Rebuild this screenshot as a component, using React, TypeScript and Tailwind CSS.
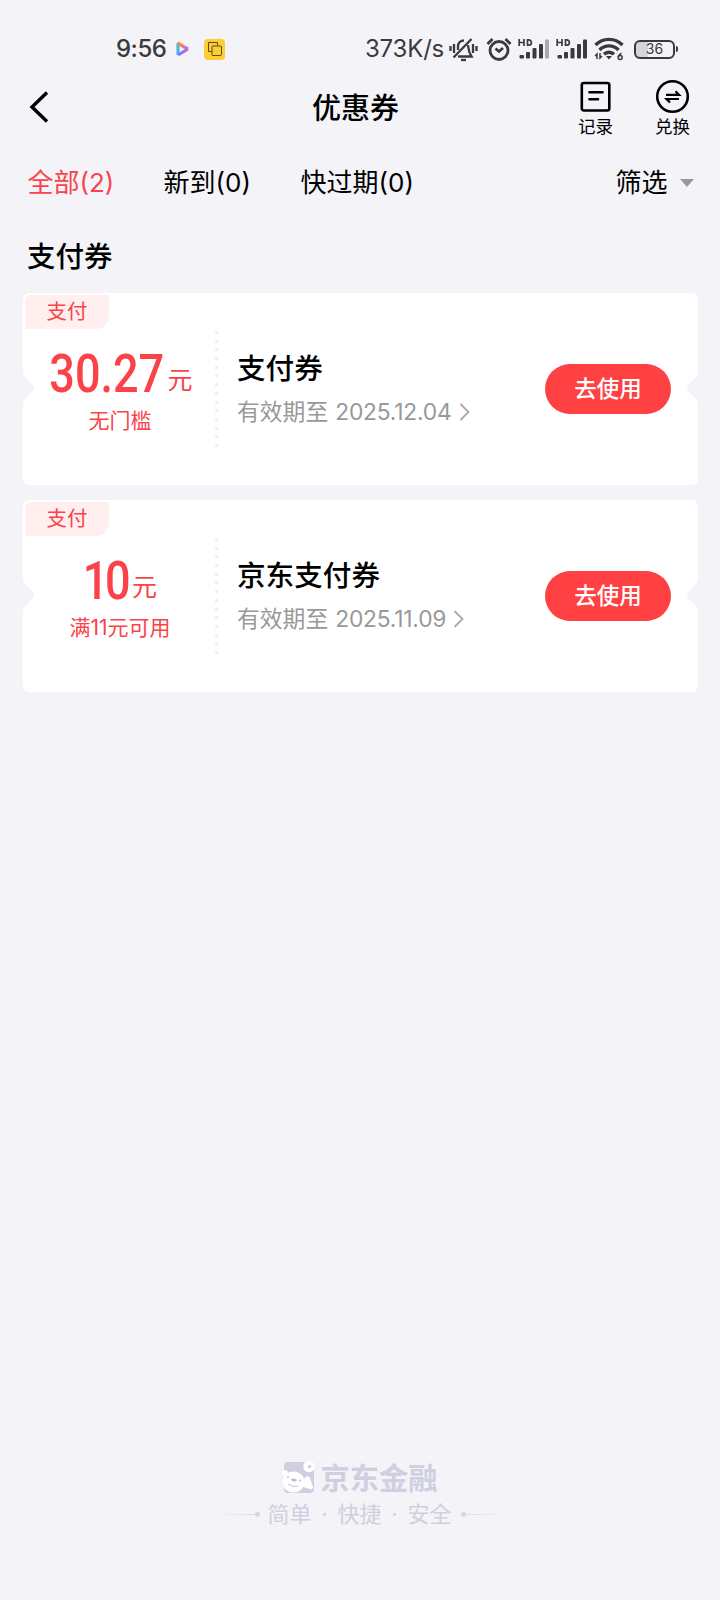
import { clsx } from 'clsx';

type Coupon = {
  id: number;
  amount: string;
  condition: string;
  title: string;
  expires: string;
};

const coupons: Coupon[] = [
  { id: 1, amount: '30.27', condition: '无门槛', title: '支付券', expires: '2025.12.04' },
  { id: 2, amount: '10', condition: '满11元可用', title: '京东支付券', expires: '2025.11.09' },
];

const tabs = [
  { label: '全部', count: 2, className: 'w-[136px] text-[#f8454c]' },
  { label: '新到', count: 0, className: 'w-[137px]' },
  { label: '快过期', count: 0, className: 'w-[315px]' },
];

const Signal = ({ weak = false }: { weak?: boolean }) => (
  <svg width="32" height="22" viewBox="0 0 32 22" fill="#3a3a3e">
    <path
      d="M1.200 1v7M6 1v7M1 4.500h5M9.500 1.800v5.400h1.200a2.700 2.700 0 0 0 0-5.400z"
      fill="none"
      stroke="#3a3a3e"
      strokeWidth="1.700"
    />
    <rect x="1.500" y="17" width="4.500" height="3.500" rx="1" />
    <rect x="8" y="14" width="4" height="6.500" rx="1" />
    <rect x="14.500" y="10" width="4" height="10.500" rx="1" />
    <rect x="21" y="6" width="4" height="14.500" rx="1" />
    <rect x="27" y="1.500" width="4" height="19" rx="1" opacity={weak ? 0.4 : 1} />
  </svg>
);

const StatusBar = () => (
  <div className="flex h-[70px] items-end pb-[5px] pl-[115px] font-['Inter','Noto_Sans_CJK_SC',sans-serif] text-[#3a3a3e]">
    <div className="flex h-8 w-[250px] items-center">
      <span className="w-[61px] pl-px text-[24px] font-medium tracking-[-0.5px]">9:56</span>
      <svg width="14" height="16" viewBox="0 0 14 16" fill="none" strokeWidth="3.2">
        <path d="M2 2v12" stroke="#45b9f2" />
        <path d="M2 14l10-6" stroke="#a56cf0" />
        <path d="M1.500 2l6 3.500" stroke="#f08a4e" />
        <path d="M7 5.300L12 8" stroke="#c773c9" />
      </svg>
      <div className="ml-[14px] flex size-[21px] items-center justify-center rounded-[4px] bg-[#fbcd36]">
        <svg width="14" height="14" viewBox="0 0 14 14" fill="none" stroke="#5c4a12" strokeWidth="1">
          <path d="M3.500 9.500h-3v-9h9v3" />
          <rect x="4" y="4" width="9.500" height="9.500" rx="1" />
        </svg>
      </div>
    </div>
    <div className="flex h-8 items-center">
      <span className="w-[84px] whitespace-nowrap text-[24px] tracking-[-0.2px]">373K/s</span>
      <svg className="shrink-0" width="29" height="25" viewBox="0 0 29 25" fill="none" stroke="#3a3a3e" strokeWidth="2.300">
        <path d="M1.500 9v5M5 7v9M24 7v9M27.500 9v5M4.500 20.500L22.500 2M9 13V9.500C9 6 11.500 3.500 15 3.500M19 8c.5 5 .5 7 3.500 11.500H9" />
        <path d="M12 23h5" />
      </svg>
      <svg className="ml-2" width="26" height="25" viewBox="0 0 26 25" fill="none" stroke="#3a3a3e" strokeWidth="2.800">
        <circle cx="13" cy="13.500" r="9" />
        <path d="M9.500 11.500l3.500 3 4-3.500M1.500 7l5-5M24.500 7l-5-5" />
      </svg>
      <div className="ml-[6px] flex gap-[6px]">
        <Signal weak />
        <Signal />
      </div>
      <svg className="ml-[6px]" width="30" height="24" viewBox="0 0 30 24" fill="none" stroke="#3a3a3e" strokeWidth="3.400">
        <path d="M1.500 8a19 19 0 0 1 27 0M5.500 13a13 13 0 0 1 19 0M10 17.300a7 7 0 0 1 10 0" />
        <path d="M12 19h6l-3 3.500z" fill="#3a3a3e" stroke="none" />
        <path d="M3 22v-5l-2 2M6 16v5l2-2M27.500 16.300q-2.800 1-3.300 3.700" strokeWidth="1.500" />
        <circle cx="26.200" cy="20.500" r="2" strokeWidth="1.500" />
      </svg>
      <div className="ml-[10px] flex h-[19px] w-[41px] items-center justify-center rounded-[6px] border-2 border-[#3a3a3e] bg-[linear-gradient(to_right,#d6d6da_33%,transparent_33%)] text-[14px] leading-none">
        36
      </div>
      <div className="ml-[1px] h-[6px] w-[2px] rounded-r bg-[#3a3a3e]" />
    </div>
  </div>
);

const Header = () => (
  <header className="flex h-[76px] justify-between pl-[29px] pr-[30px]">
    <svg className="mt-[21px]" width="20" height="32" viewBox="0 0 20 32" fill="none" stroke="#000" strokeWidth="3.400">
      <path d="M18 1.500L3 16l15 14.500" />
    </svg>
    <h1 className="ml-[84px] mt-[19px] text-[29px] font-medium leading-[40px]">优惠券</h1>
    <div className="flex gap-[42px] pt-[9px] text-[17.5px] leading-[23px]">
      <div className="flex flex-col items-center">
        <svg width="35" height="36" viewBox="0 0 35 36" fill="none" stroke="#000" strokeWidth="2.600">
          <rect x="3.800" y="4" width="27.500" height="27.500" rx="2" />
          <path d="M11.500 13.200h13M11.500 20.200h8.500" strokeLinecap="round" />
        </svg>
        <span>记录</span>
      </div>
      <div className="flex flex-col items-center">
        <svg width="35" height="36" viewBox="0 0 35 36" fill="none" stroke="#000" strokeWidth="2.600">
          <circle cx="17.500" cy="17.500" r="15.300" />
          <path d="M11 15.800h13l-3.500-3.500M24 20H11.500l3.500 3.500" strokeWidth="2.200" />
        </svg>
        <span>兑换</span>
      </div>
    </div>
  </header>
);

const CouponCard = ({ coupon }: { coupon: Coupon }) => (
  <div className="relative flex h-[192px] rounded-[6px] bg-white">
    {/* 切口 */}
    <svg className="absolute left-0 top-[79px]" width="12" height="32" viewBox="0 0 12 32" fill="#f3f3f8">
      <path d="M0 1q1 3 3 5l6 6q4 4 0 8l-6 6q-2 2-3 5z" />
    </svg>
    <svg className="absolute right-0 top-[79px]" width="12" height="32" viewBox="0 0 12 32" fill="#f3f3f8">
      <path d="M12 1q-1 3-3 5l-6 6q-4 4 0 8l6 6q2 2 3 5z" />
    </svg>
    <div className="w-[192px] shrink-0 pl-[2px] pt-[2px] text-[#fa4248]">
      <div className="h-[34px] w-[84px] rounded-br-[13px] rounded-tl-[6px] bg-[#ffefef] text-center text-[20.5px] leading-[34px]">
        支付
      </div>
      <div className="mt-[18px] flex h-[54px] items-baseline justify-center">
        <span
          className={clsx(
            "origin-right scale-x-[.85] font-['Roboto',sans-serif] text-[53px] font-medium leading-[54px]",
            coupon.amount.length > 2 ? '-ml-[18px]' : '-ml-[8px] tracking-[-4px]',
          )}
        >
          {coupon.amount}
        </span>
        <span className={clsx('relative -top-[3px] text-[25px] leading-none', coupon.amount.length > 2 ? 'ml-[3px]' : 'ml-[5px]')}>
          元
        </span>
      </div>
      <div className="mt-[6px] text-center text-[21px] leading-[28px]">{coupon.condition}</div>
    </div>
    {/* 点線 */}
    <div className="mt-[38px] flex h-[116px] w-[3px] shrink-0 flex-col justify-between">
      {Array.from({ length: 14 }, (_, i) => (
        <i key={i} className="size-[3px] rounded-full bg-[#ebebee]" />
      ))}
    </div>
    <div className="flex-1 pl-[19px] pt-[57px]">
      <div className="text-[28.6px] font-medium leading-[38px] text-black">{coupon.title}</div>
      <div className="mt-[9px] flex items-center whitespace-nowrap text-[22.8px] leading-[30px] text-[#999]">
        有效期至
        <span className="ml-[7px] tracking-[-0.2px]">{coupon.expires}</span>
        <svg className="ml-[7px]" width="11" height="18" viewBox="0 0 11 18" fill="none" stroke="#aaa" strokeWidth="1.800">
          <path d="M1.500 1l8 8-8 8" />
        </svg>
      </div>
    </div>
    <button className="mr-[27px] mt-[71px] h-[50px] w-[126px] rounded-full bg-[#ff4144] text-[22.5px] font-medium leading-[48px] text-white">
      去使用
    </button>
  </div>
);

const Footer = () => (
  <footer className="mt-auto flex h-[142px] flex-col items-center text-[#cfcfe0]">
    <div className="flex h-[38px] items-center gap-[5px]">
      <svg width="33" height="34" viewBox="0 0 33 34">
        <rect x="2" y="2" width="30" height="31" rx="4" fill="#cfcfe0" />
        <circle cx="27" cy="6.500" r="5.800" fill="#fff" />
        <circle cx="27.500" cy="6.500" r="1.800" fill="#cfcfe0" />
        <ellipse cx="11.500" cy="22" rx="11" ry="10.500" fill="#fff" />
        <circle cx="3" cy="13" r="2.800" fill="#fff" />
        <path d="M19 21l5-4q3-2 4 1l3 9q0 3-3 2l-7-2z" fill="#fff" />
        <ellipse cx="12" cy="20" rx="2.800" ry="1.400" fill="#b9b9cc" transform="rotate(12 12 20)" />
        <circle cx="6" cy="17" r="0.900" fill="#b9b9cc" />
        <circle cx="18" cy="20.500" r="0.900" fill="#b9b9cc" />
        <path d="M6 24q5 4 10 2" fill="none" stroke="#c4c4d6" />
      </svg>
      <span className="pt-[3px] text-[29.3px] font-bold leading-[38px]">京东金融</span>
    </div>
    <div className="mt-[2px] flex items-center text-[22px] leading-[32px]">
      <i className="h-px w-[42px] bg-linear-to-r from-transparent to-[#dcdce8]" />
      <i className="mr-[8px] size-[5px] rounded-full bg-[#d5d5e3]" />
      <span className="flex w-[184px] justify-between whitespace-nowrap">
        <span>简单</span>
        <span>·</span>
        <span>快捷</span>
        <span>·</span>
        <span>安全</span>
      </span>
      <i className="ml-[9px] size-[5px] rounded-full bg-[#d5d5e3]" />
      <i className="h-px w-[42px] bg-linear-to-l from-transparent to-[#dcdce8]" />
    </div>
  </footer>
);

const App = () => {
  return (
    <div className="flex h-[1600px] w-[720px] flex-col overflow-hidden bg-[#f3f3f8] font-['Inter','Noto_Sans_CJK_SC',sans-serif] text-black">
      <StatusBar />
      <Header />
      <nav className="mx-[16px] flex h-[77px] border-b border-[#f0f0f4] pl-[11.5px] pt-[18px] text-[26px] leading-[38px]">
        {tabs.map((tab) => (
          <span key={tab.label} className={clsx('shrink-0 whitespace-nowrap', tab.className)}>
            {tab.label}
            <span>({tab.count})</span>
          </span>
        ))}
        <span className="shrink-0">筛选</span>
        <svg className="ml-[12px] mt-[15px] shrink-0" width="14" height="8" viewBox="0 0 14 8" fill="#999">
          <path d="M0 0h14L7 8z" />
        </svg>
      </nav>
      <main className="pl-[23px] pr-[22px]">
        <h2 className="h-[70px] pl-[4px] pt-[15px] text-[28.5px] font-medium leading-[38px]">支付券</h2>
        <div className="flex flex-col gap-[15px]">
          {coupons.map((coupon) => (
            <CouponCard key={coupon.id} coupon={coupon} />
          ))}
        </div>
      </main>
      <Footer />
    </div>
  );
};

export default App;
